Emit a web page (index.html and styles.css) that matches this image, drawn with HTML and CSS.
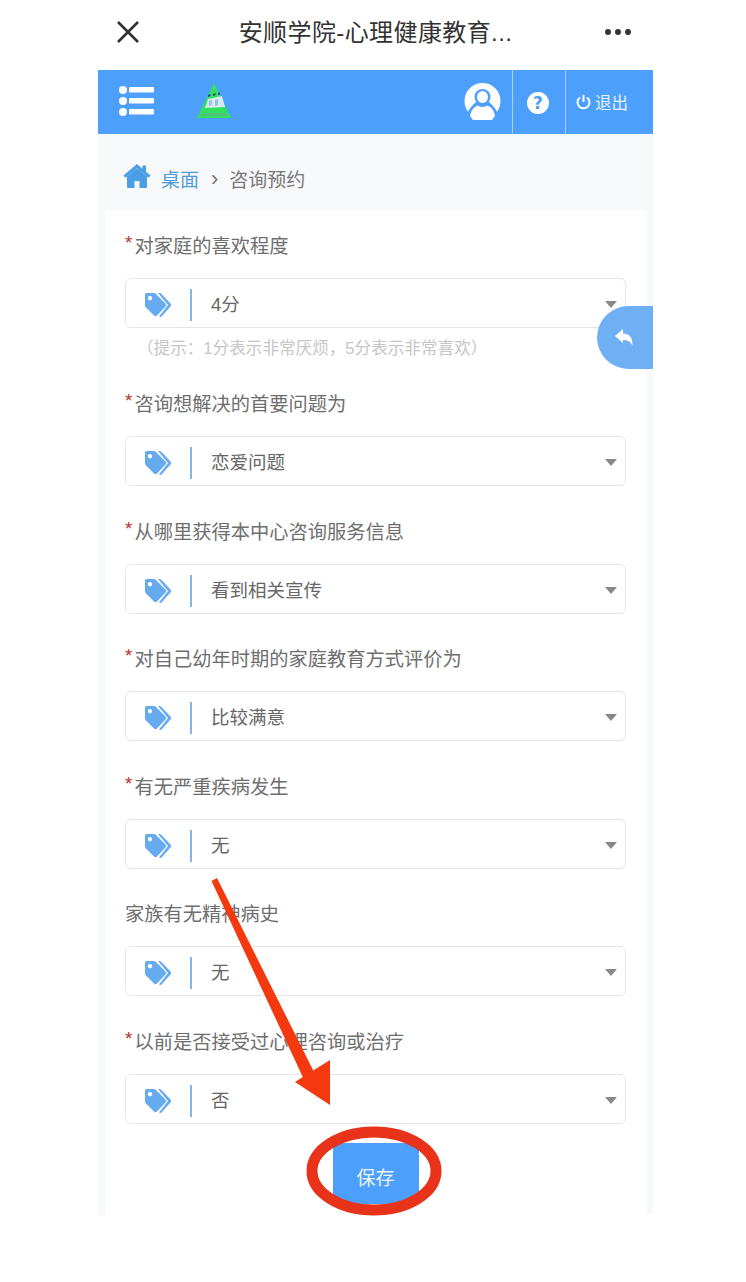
FILE: index.html
```html
<!DOCTYPE html>
<html lang="zh-CN">
<head>
    <meta charset="UTF-8">
    <meta name="viewport" content="width=device-width, initial-scale=1.0">
    <title>安顺学院-心理健康教育</title>
    <link rel="stylesheet" href="styles.css">
</head>
<body>
    <svg width="0" height="0" class="defs">
        <symbol id="tags" viewBox="0 0 28 26">
            <path d="M2.5 1H10q1 0 2 1L21.500 11.500q1.500 1.500 0 3L13 23.500q-1.500 1.500-3 0L2 15.500q-1-1-1-2.500V2.500Q1 1 2.500 1ZM6 4a2.200 2.200 0 1 0 .01 0Z" fill-rule="evenodd"/>
            <path d="M14 1h1.500q1 0 2 1L26.500 11.500q1.500 1.500 0 3L18 24q-1.500 1.500-3 .5L24 13Z"/>
        </symbol>
    </svg>

    <div class="topbar">
        <svg class="close" width="24" height="24" viewBox="0 0 24 24"><path d="M2 2L22 22M22 2L2 22" stroke="#333" stroke-width="2.600" fill="none"/></svg>
        <div class="topbar-title">安顺学院-心理健康教育...</div>
        <div class="more"><i></i><i></i><i></i></div>
    </div>

    <div class="page">
        <header class="header">
            <svg class="menu" width="35" height="30" viewBox="0 0 35 30" fill="#fff">
                <circle cx="4" cy="4" r="4"/><circle cx="4" cy="15" r="4"/><circle cx="4" cy="26" r="4"/>
                <rect x="10" y="1" width="25" height="5.500" rx="1"/><rect x="10" y="12" width="25" height="5.500" rx="1"/><rect x="10" y="23" width="25" height="5.500" rx="1"/>
            </svg>
            <svg class="logo" width="36" height="37" viewBox="0 0 36 37">
                <polygon points="17,1 34,36 0,36" fill="#32e060"/>
                <path d="M11 17L25 14L28 25L8 26Z" fill="#d5e9ee"/>
                <path d="M11 13l2.500-1v2l-2.500 1ZM16 12l2.500-1v2l-2.500 1ZM21 11l2-.5v2l-2 .5Z" fill="#243f8f"/>
                <path d="M12 19l3-1v5l-3 1ZM18 18l3-1v6l-3 1Z" fill="#9dbfe6"/>
                <path d="M5 31h24l1 3H4Z" fill="#52c07a"/>
            </svg>
            <div class="header-right">
                <svg class="avatar" width="37" height="37" viewBox="0 0 37 37">
                    <circle cx="18.500" cy="18" r="18" fill="#fff"/>
                    <path d="M12 19Q6 24 3 31L8 37H29L34 31Q31 24 25 19Z" fill="#4d9ffc"/>
                    <circle cx="18.500" cy="14" r="8" fill="#4d9ffc"/>
                    <ellipse cx="18.500" cy="14" rx="5.500" ry="6" fill="#fff"/>
                    <path d="M14 22.500Q7 25 6 33L9 37H28L31 33Q30 25 23 22.500Q18.500 25.500 14 22.500Z" fill="#fff"/>
                </svg>
                <div class="header-cell help">
                    <div class="help-icon">?</div>
                </div>
                <div class="header-cell logout">
                    <svg width="15" height="16" viewBox="0 0 15 16"><path d="M4 3.500a6 6 0 1 0 7 0M7.500 1v7" stroke="#fff" stroke-width="2" fill="none"/></svg>
                    <span>退出</span>
                </div>
            </div>
        </header>

        <nav class="crumbs">
            <svg class="home" width="28" height="26" viewBox="0 0 28 26" fill="#4a9ee6">
                <path d="M14 5L4 13.500V24q0 1 1 1h6.500v-7h5v7H23q1 0 1-1V13.500Z"/>
                <path d="M14 1L0.500 12.500l2 2.300L14 5l11.500 9.800 2-2.300L23 8.700V2.500h-3.500v3.200Z"/>
            </svg>
            <a class="crumb-link">桌面</a>
            <span class="crumb-sep">›</span>
            <span class="crumb-current">咨询预约</span>
        </nav>

        <main class="card">
            <div class="field field-hint">
                <div class="field-label"><em>*</em>对家庭的喜欢程度</div>
                <div class="select">
                    <svg class="tag" width="28" height="26"><use href="#tags"/></svg>
                    <span class="select-value">4分</span>
                    <i class="caret"></i>
                </div>
                <div class="hint">（提示：1分表示非常厌烦，5分表示非常喜欢）</div>
            </div>
            <div class="field">
                <div class="field-label"><em>*</em>咨询想解决的首要问题为</div>
                <div class="select">
                    <svg class="tag" width="28" height="26"><use href="#tags"/></svg>
                    <span class="select-value">恋爱问题</span>
                    <i class="caret"></i>
                </div>
            </div>
            <div class="field">
                <div class="field-label"><em>*</em>从哪里获得本中心咨询服务信息</div>
                <div class="select">
                    <svg class="tag" width="28" height="26"><use href="#tags"/></svg>
                    <span class="select-value">看到相关宣传</span>
                    <i class="caret"></i>
                </div>
            </div>
            <div class="field">
                <div class="field-label"><em>*</em>对自己幼年时期的家庭教育方式评价为</div>
                <div class="select">
                    <svg class="tag" width="28" height="26"><use href="#tags"/></svg>
                    <span class="select-value">比较满意</span>
                    <i class="caret"></i>
                </div>
            </div>
            <div class="field">
                <div class="field-label"><em>*</em>有无严重疾病发生</div>
                <div class="select">
                    <svg class="tag" width="28" height="26"><use href="#tags"/></svg>
                    <span class="select-value">无</span>
                    <i class="caret"></i>
                </div>
            </div>
            <div class="field">
                <div class="field-label">家族有无精神病史</div>
                <div class="select">
                    <svg class="tag" width="28" height="26"><use href="#tags"/></svg>
                    <span class="select-value">无</span>
                    <i class="caret"></i>
                </div>
            </div>
            <div class="field field-last">
                <div class="field-label"><em>*</em>以前是否接受过心理咨询或治疗</div>
                <div class="select">
                    <svg class="tag" width="28" height="26"><use href="#tags"/></svg>
                    <span class="select-value">否</span>
                    <i class="caret"></i>
                </div>
            </div>
            <button class="save">保存</button>
        </main>

        <div class="back-btn">
            <svg width="20" height="20" viewBox="0 0 20 20"><path d="M1 8L9 1v4.500c6 0 10 4 9.500 12.500c-1.500-4-4-6-9.500-6V15Z" fill="#fff"/></svg>
        </div>
    </div>

    <!-- red marks drawn over the screenshot -->
    <svg class="marks" width="746" height="1282" viewBox="0 0 746 1282">
        <path d="M211.500 881L217 878L318 1080L307 1086Z" fill="#f4390f"/>
        <polygon points="295,1082 330,1060 330,1105" fill="#f4390f"/>
        <ellipse cx="374" cy="1171" rx="62" ry="39" fill="none" stroke="#e9321a" stroke-width="11"/>
    </svg>
</body>
</html>
```

FILE: styles.css
```css
body {
    font-family: "Liberation Sans", "Noto Sans CJK SC", sans-serif;
    margin: 0;
    padding: 0;
    background-color: #fff;
    position: relative;
    height: 1282px;
    overflow: hidden;
}

.defs {
    position: absolute;
}

.topbar {
    height: 70px;
    margin: 0 115px 0 116px;
    display: flex;
    align-items: center;
    justify-content: space-between;
    padding: 4px 0 10px;
    box-sizing: border-box;
}

.topbar-title {
    font-size: 24px;
    letter-spacing: 0.4px;
    color: #333;
    line-height: 30px;
    margin: 2px 0 0 6px;
}

.more {
    display: flex;
    gap: 4px;
}

.more i {
    width: 6px;
    height: 6px;
    border-radius: 50%;
    background-color: #333;
}

.page {
    width: 555px;
    margin-left: 98px;
    background-color: #f7f9fb;
    position: relative;
}

.header {
    height: 64px;
    background-color: #4d9ffc;
    display: flex;
    align-items: center;
    box-sizing: border-box;
    padding-left: 21px;
}

.menu {
    margin-right: 43px;
    margin-top: -2px;
}

.logo {
    margin-top: -3px;
}

.header-right {
    margin-left: auto;
    display: flex;
    align-items: center;
    height: 100%;
}

.avatar {
    margin-right: 11px;
    margin-top: -2px;
}

.header-cell {
    height: 100%;
    border-left: 1px solid #a9cffa;
    display: flex;
    align-items: center;
    justify-content: center;
    box-sizing: border-box;
}

.help {
    width: 53px;
}

.help-icon {
    width: 22px;
    height: 22px;
    margin: 2px 2px 0 0;
    border-radius: 50%;
    background-color: #fff;
    color: #4d9ffc;
    font-family: "DejaVu Sans", sans-serif;
    font-size: 17px;
    font-weight: bold;
    line-height: 22px;
    text-align: center;
}

.logout {
    width: 88px;
    justify-content: flex-start;
    padding-left: 10px;
    gap: 4px;
    color: #e6f1fe;
    font-size: 16.500px;
}

.crumbs {
    height: 77px;
    display: flex;
    align-items: center;
    padding-left: 25px;
    padding-top: 12px;
    box-sizing: border-box;
    font-size: 19px;
}

.home {
    margin-right: 10px;
    margin-top: -6px;
}

.crumb-link {
    color: #4f9dd8;
}

.crumb-sep {
    color: #777;
    margin: 0 11px 0 12px;
    font-size: 22px;
    line-height: 20px;
}

.crumb-current {
    color: #777;
}

.card {
    width: 541px;
    height: 1004px;
    margin-left: 7px;
    background-color: #fff;
    box-sizing: border-box;
    padding: 26px 20px 0;
}

.field {
    padding-bottom: 36.500px;
}

.field-hint {
    padding-bottom: 41.500px;
}

.field-last {
    padding-bottom: 19px;
}

.field-label {
    font-size: 19.250px;
    line-height: 20px;
    color: #6e6e6e;
    margin-bottom: 21px;
}

.field-label em {
    color: #b8302c;
    font-style: normal;
    font-size: 19px;
    line-height: 10px;
    vertical-align: 4px;
    margin-right: 2px;
}

.select {
    height: 50px;
    box-sizing: border-box;
    border: 1px solid #e4e6e8;
    border-radius: 6px;
    display: flex;
    align-items: center;
    padding-left: 18px;
    padding-top: 4px;
    position: relative;
}

.tag {
    fill: #66aaf0;
    margin-right: 18px;
}

.select-value {
    border-left: 2px solid #82b6e6;
    padding-left: 19px;
    height: 32px;
    line-height: 32px;
    font-size: 18.500px;
    color: #666;
}

.caret {
    position: absolute;
    right: 8px;
    top: 22px;
    border-left: 6px solid transparent;
    border-right: 6px solid transparent;
    border-top: 7px solid #888;
}

.hint {
    color: #c6c6c6;
    font-size: 16.600px;
    line-height: 20px;
    margin-top: 11px;
    margin-left: 12px;
    margin-bottom: -5.500px;
}

.save {
    display: block;
    width: 86px;
    height: 61px;
    margin: 0 auto;
    padding: 7px 0 0;
    background-color: #4d9ffc;
    border: 0;
    color: #eaf3fe;
    font-family: inherit;
    font-size: 19px;
}

.back-btn {
    position: absolute;
    right: 0;
    top: 236px;
    width: 56px;
    height: 63px;
    background-color: #6fb0f5;
    border-radius: 32px 0 0 32px;
    display: flex;
    align-items: center;
    justify-content: center;
    padding-right: 3px;
    box-sizing: border-box;
}

.marks {
    position: absolute;
    left: 0;
    top: 0;
    pointer-events: none;
}
```
